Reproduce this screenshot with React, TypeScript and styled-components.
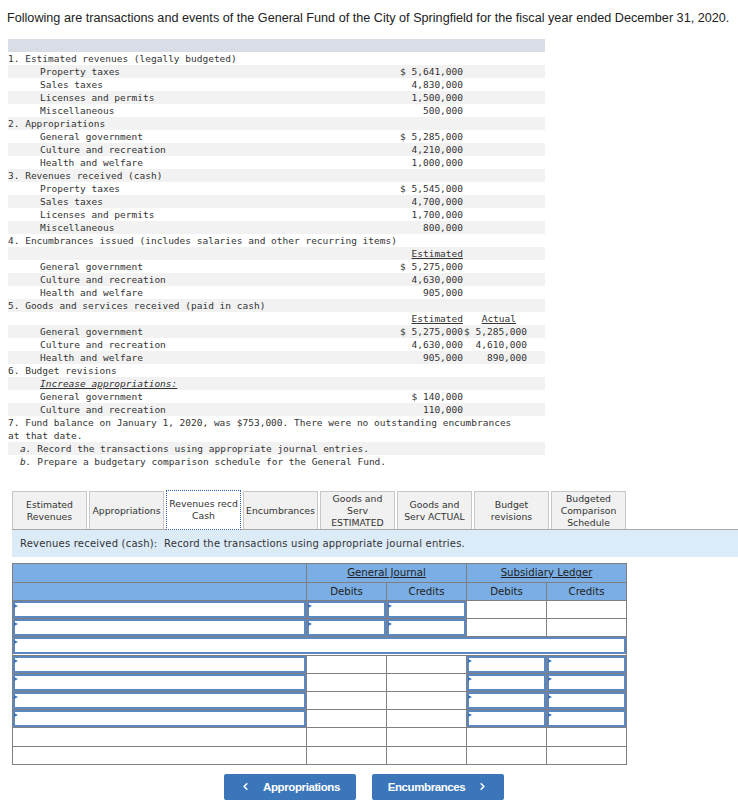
import React from 'react';
import styled, { createGlobalStyle, css } from 'styled-components';
import { ChevronLeft, ChevronRight } from 'lucide-react';

const Global = createGlobalStyle`
  html, body { margin: 0; padding: 0; background: #ffffff; }
  body { font-family: "Liberation Sans", Arial, sans-serif; color: #333333; }
`;

const Page = styled.div`
  width: 738px;
  padding-top: 10px;
`;

const Intro = styled.p`
  margin: 0 0 0 7px;
  font-family: "Liberation Sans", Arial, sans-serif;
  font-size: 12.65px;
  line-height: 16px;
  color: #222222;
  white-space: nowrap;
`;

const Problem = styled.div`
  margin: 13px 0 0 8px;
  width: 537px;
  font-family: "DejaVu Sans Mono", "Liberation Mono", monospace;
  font-size: 9.5px;
  line-height: 13px;
  color: #333333;
`;

const HeadBar = styled.div`
  height: 13px;
  background: #d9dde6;
`;

const Line = styled.div<{ $shade: boolean }>`
  display: grid;
  grid-template-columns: 392px 63px 64px 1fr;
  background: ${(p) => (p.$shade ? '#f2f2f2' : '#ffffff')};
  white-space: pre;
`;

const Label = styled.div<{ $pad: number; $full?: boolean }>`
  padding-left: ${(p) => p.$pad}px;
  ${(p) =>
    p.$full &&
    css`
      grid-column: 1 / -1;
    `}
`;

const Amount = styled.div<{ $pr?: number }>`
  text-align: right;
  padding-right: ${(p) => p.$pr ?? 0}px;
`;

const Under = styled.span`
  text-decoration: underline;
`;

const ItalicUnder = styled.span`
  font-style: italic;
  text-decoration: underline;
`;

const Ital = styled.span`
  font-style: italic;
`;

const Tabs = styled.div`
  margin: 23px 0 0 12px;
  display: flex;
  align-items: flex-start;
  gap: 2px;
  height: 38px;
  border-bottom: 1px solid #a9a9a9;
`;

const Tab = styled.div<{ $active?: boolean }>`
  width: 75px;
  height: 38px;
  box-sizing: border-box;
  border: 1px solid #c8c8c8;
  border-bottom: none;
  background: #f1f1f1;
  display: flex;
  align-items: center;
  justify-content: center;
  text-align: center;
  font-family: "DejaVu Sans", Verdana, sans-serif;
  font-size: 9.3px;
  line-height: 12px;
  color: #333333;
  ${(p) =>
    p.$active &&
    css`
      background: #ffffff;
      border: 1px dotted #2c5fb3;
      height: 40px;
      margin-top: -1px;
      position: relative;
      z-index: 1;
    `}
`;

const Instructions = styled.div`
  margin-left: 12px;
  height: 27px;
  background: #dcebf8;
  display: flex;
  align-items: center;
  padding-left: 8px;
  font-family: "DejaVu Sans", Verdana, sans-serif;
  font-size: 10px;
  letter-spacing: 0.2px;
  color: #333333;
  white-space: pre;
`;

const Journal = styled.table`
  margin: 6px 0 0 12px;
  border-collapse: collapse;
  width: 614px;
  table-layout: fixed;
  font-family: "DejaVu Sans", Verdana, sans-serif;
  font-size: 10.2px;
  color: #222222;
`;

const HeadCell = styled.th`
  background: #7aaee4;
  border: 1px solid #7f7f7f;
  height: 17.5px;
  padding: 0;
  font-weight: normal;
  text-align: center;
`;

const Cell = styled.td`
  border: 1px solid #808080;
  height: 17.2px;
  padding: 0;
  background: #ffffff;
`;

const Field = styled.div`
  position: relative;
  height: 17px;
  box-sizing: border-box;
  border: 2px solid #5b87c2;
  background: #ffffff;
  &::before {
    content: '';
    position: absolute;
    left: -1px;
    top: 1px;
    border-left: 4px solid #3b73bb;
    border-top: 2.5px solid transparent;
    border-bottom: 2.5px solid transparent;
  }
`;

const Nav = styled.div`
  display: flex;
  justify-content: center;
  gap: 16px;
  margin-top: 9px;
  padding-right: 10px;
`;

const NavButton = styled.button`
  width: 132px;
  height: 26px;
  border: none;
  border-radius: 2px;
  background: #3a76b9;
  color: #ffffff;
  font-family: "Liberation Sans", Arial, sans-serif;
  font-weight: bold;
  font-size: 11.5px;
  letter-spacing: -0.4px;
  display: flex;
  align-items: center;
  justify-content: center;
  gap: 12px;
  padding: 0;
`;

type Row = {
  label?: React.ReactNode;
  pad?: number;
  amount?: React.ReactNode;
  actual?: React.ReactNode;
  actualPr?: number;
  full?: boolean;
};

const S = 32;

const rows: Row[] = [
  { label: '1. Estimated revenues (legally budgeted)' },
  { label: 'Property taxes', pad: S, amount: '$ 5,641,000' },
  { label: 'Sales taxes', pad: S, amount: '4,830,000' },
  { label: 'Licenses and permits', pad: S, amount: '1,500,000' },
  { label: 'Miscellaneous', pad: S, amount: '500,000' },
  { label: '2. Appropriations' },
  { label: 'General government', pad: S, amount: '$ 5,285,000' },
  { label: 'Culture and recreation', pad: S, amount: '4,210,000' },
  { label: 'Health and welfare', pad: S, amount: '1,000,000' },
  { label: '3. Revenues received (cash)' },
  { label: 'Property taxes', pad: S, amount: '$ 5,545,000' },
  { label: 'Sales taxes', pad: S, amount: '4,700,000' },
  { label: 'Licenses and permits', pad: S, amount: '1,700,000' },
  { label: 'Miscellaneous', pad: S, amount: '800,000' },
  { label: '4. Encumbrances issued (includes salaries and other recurring items)' },
  { label: '', amount: <Under>Estimated</Under> },
  { label: 'General government', pad: S, amount: '$ 5,275,000' },
  { label: 'Culture and recreation', pad: S, amount: '4,630,000' },
  { label: 'Health and welfare', pad: S, amount: '905,000' },
  { label: '5. Goods and services received (paid in cash)' },
  { label: '', amount: <Under>Estimated</Under>, actual: <Under>Actual</Under>, actualPr: 11 },
  { label: 'General government', pad: S, amount: '$ 5,275,000', actual: '$ 5,285,000' },
  { label: 'Culture and recreation', pad: S, amount: '4,630,000', actual: '4,610,000' },
  { label: 'Health and welfare', pad: S, amount: '905,000', actual: '890,000' },
  { label: '6. Budget revisions' },
  { label: <ItalicUnder>Increase appropriations:</ItalicUnder>, pad: S },
  { label: 'General government', pad: S, amount: '$ 140,000' },
  { label: 'Culture and recreation', pad: S, amount: '110,000' },
  {
    full: true,
    label: (
      <>
        7. Fund balance on January 1, 2020, was $753,000. There were no outstanding encumbrances
        <br />
        at that date.
      </>
    ),
  },
  {
    pad: 12,
    full: true,
    label: (
      <>
        <Ital>a.</Ital> Record the transactions using appropriate journal entries.
      </>
    ),
  },
  {
    pad: 12,
    full: true,
    label: (
      <>
        <Ital>b.</Ital> Prepare a budgetary comparison schedule for the General Fund.
      </>
    ),
  },
];

const tabs: { text: React.ReactNode; active?: boolean }[] = [
  { text: <>Estimated<br />Revenues</> },
  { text: 'Appropriations' },
  { text: <>Revenues recd<br />Cash</>, active: true },
  { text: 'Encumbrances' },
  { text: <>Goods and<br />Serv<br />ESTIMATED</> },
  { text: <>Goods and<br />Serv ACTUAL</> },
  { text: <>Budget<br />revisions</> },
  { text: <>Budgeted<br />Comparison<br />Schedule</> },
];

type Kind = 'gj' | 'full' | 'sub' | 'plain';
const journalRows: Kind[] = ['gj', 'gj', 'full', 'sub', 'sub', 'sub', 'sub', 'plain', 'plain'];

const InputCell: React.FC<{ on: boolean; span?: number }> = ({ on, span }) => (
  <Cell colSpan={span}>{on ? <Field /> : null}</Cell>
);

const JournalRow: React.FC<{ kind: Kind }> = ({ kind }) => {
  if (kind === 'full') {
    return (
      <tr>
        <InputCell on span={5} />
      </tr>
    );
  }
  const desc = kind !== 'plain';
  const gj = kind === 'gj';
  const sub = kind === 'sub';
  return (
    <tr>
      <InputCell on={desc} />
      <InputCell on={gj} />
      <InputCell on={gj} />
      <InputCell on={sub} />
      <InputCell on={sub} />
    </tr>
  );
};

export default function App() {
  return (
    <Page>
      <Global />
      <Intro>
        Following are transactions and events of the General Fund of the City of Springfield for the fiscal year ended
        December 31, 2020.
      </Intro>

      <Problem>
        <HeadBar />
        {rows.map((r, i) => (
          <Line key={i} $shade={i % 2 === 1}>
            <Label $pad={r.pad ?? 0} $full={r.full}>
              {r.label}
            </Label>
            {!r.full && <Amount>{r.amount}</Amount>}
            {!r.full && <Amount $pr={r.actualPr}>{r.actual}</Amount>}
          </Line>
        ))}
      </Problem>

      <Tabs>
        {tabs.map((t, i) => (
          <Tab key={i} $active={t.active}>
            <span>{t.text}</span>
          </Tab>
        ))}
      </Tabs>
      <Instructions>Revenues received (cash):  Record the transactions using appropriate journal entries.</Instructions>

      <Journal>
        <colgroup>
          <col style={{ width: 294 }} />
          <col style={{ width: 80 }} />
          <col style={{ width: 80 }} />
          <col style={{ width: 80 }} />
          <col style={{ width: 80 }} />
        </colgroup>
        <thead>
          <tr>
            <HeadCell />
            <HeadCell colSpan={2}>
              <Under>General Journal</Under>
            </HeadCell>
            <HeadCell colSpan={2}>
              <Under>Subsidiary Ledger</Under>
            </HeadCell>
          </tr>
          <tr>
            <HeadCell />
            <HeadCell>Debits</HeadCell>
            <HeadCell>Credits</HeadCell>
            <HeadCell>Debits</HeadCell>
            <HeadCell>Credits</HeadCell>
          </tr>
        </thead>
        <tbody>
          {journalRows.map((k, i) => (
            <JournalRow key={i} kind={k} />
          ))}
        </tbody>
      </Journal>

      <Nav>
        <NavButton>
          <ChevronLeft size={11} strokeWidth={3.5} />
          Appropriations
        </NavButton>
        <NavButton>
          Encumbrances
          <ChevronRight size={11} strokeWidth={3.5} />
        </NavButton>
      </Nav>
    </Page>
  );
}
